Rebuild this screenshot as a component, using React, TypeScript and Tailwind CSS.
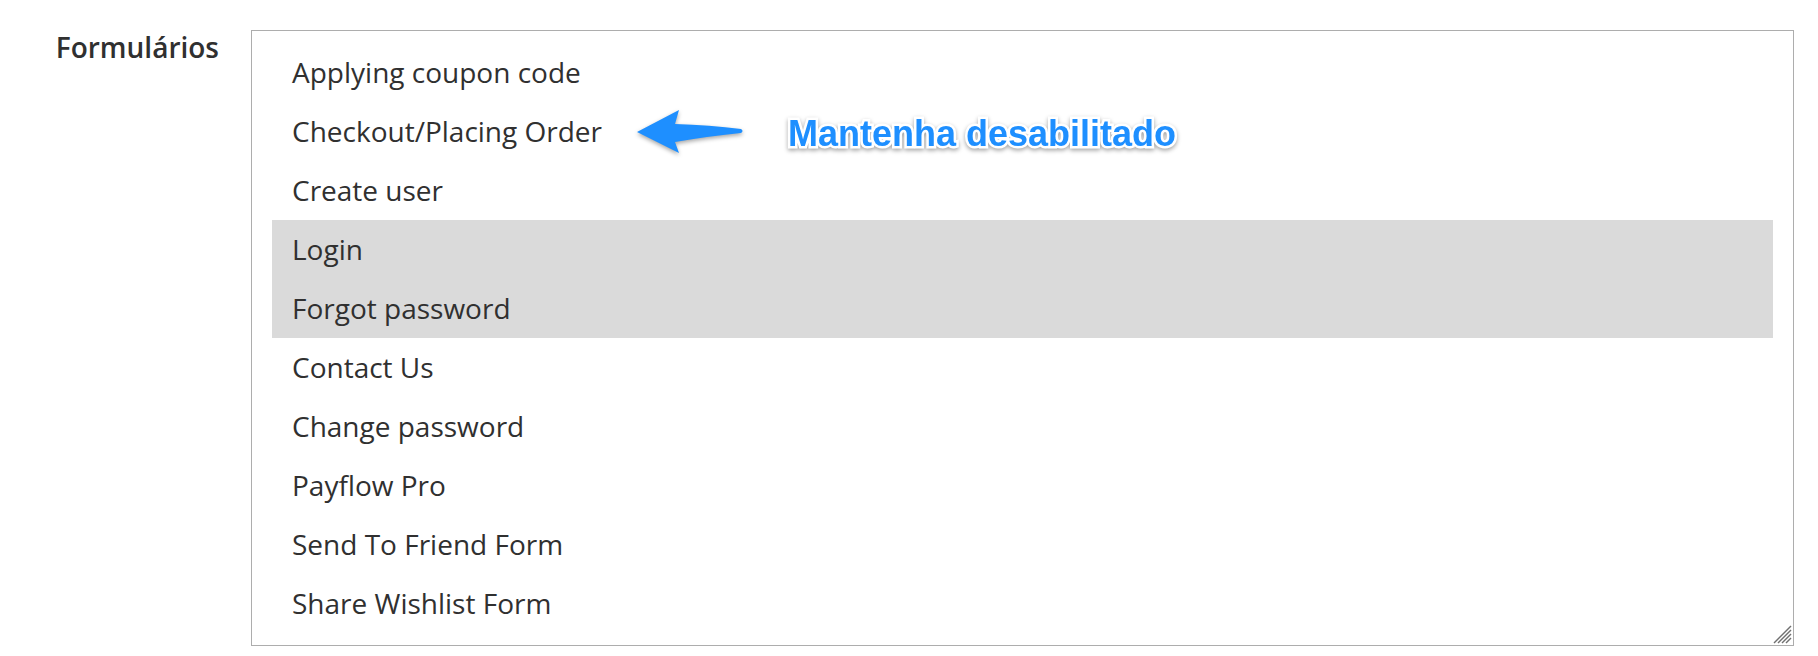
import React from "react";

const forms = [
  "Applying coupon code",
  "Checkout/Placing Order",
  "Create user",
  "Login",
  "Forgot password",
  "Contact Us",
  "Change password",
  "Payflow Pro",
  "Send To Friend Form",
  "Share Wishlist Form",
];

const selected = ["Login", "Forgot password"];

export default function App() {
  return (
    <div className="relative w-[1818px] h-[656px] bg-white font-['Open_Sans',sans-serif] text-[#303030] overflow-hidden">
      <div className="flex pt-[30px]">
        {/* Field label */}
        <label className="w-[219px] shrink-0 text-right text-[28px] leading-[34px] font-semibold">
          Formulários
        </label>

        {/* Multiselect */}
        <div className="relative ml-[32px] w-[1543px] border border-[#adadad] px-[20px] py-[12px]">
          {forms.map((f) => (
            <div
              key={f}
              className={
                selected.includes(f)
                  ? "h-[59px] pl-[20px] text-[28px] leading-[59px] bg-[#dadada]"
                  : "h-[59px] pl-[20px] text-[28px] leading-[59px]"
              }
            >
              {f}
            </div>
          ))}

          {/* Resize grip */}
          <svg
            className="absolute right-[1px] bottom-[1px]"
            width="20"
            height="20"
            viewBox="0 0 20 20"
          >
            <path d="M2 19 L19 2" stroke="#707070" strokeWidth="1.4" />
            <path d="M6 19 L19 6" stroke="#707070" strokeWidth="1.4" />
            <path d="M10 19 L19 10" stroke="#707070" strokeWidth="1.4" />
            <path d="M14 19 L19 14" stroke="#707070" strokeWidth="1.4" />
          </svg>
        </div>
      </div>

      {/* Annotation arrow */}
      <svg
        className="absolute left-[630px] top-[100px] drop-shadow-[0_2px_2px_rgba(0,0,0,0.35)]"
        width="120"
        height="65"
        viewBox="0 0 120 65"
      >
        <path
          d="M7 32 L49 10 L45 24 Q80 25 111 29 Q114 31 111 33 Q80 36 45 42 L49 53 Z"
          fill="#1e8fff"
        />
      </svg>

      {/* Annotation text */}
      <div className="absolute left-[788px] top-[116px] font-['Liberation_Sans',Arial,sans-serif] font-bold text-[36px] leading-none text-[#1e8fff] [-webkit-text-stroke:5px_white] [paint-order:stroke_fill] drop-shadow-[0_2px_2px_rgba(0,0,0,0.35)] whitespace-nowrap">
        Mantenha desabilitado
      </div>
    </div>
  );
}
